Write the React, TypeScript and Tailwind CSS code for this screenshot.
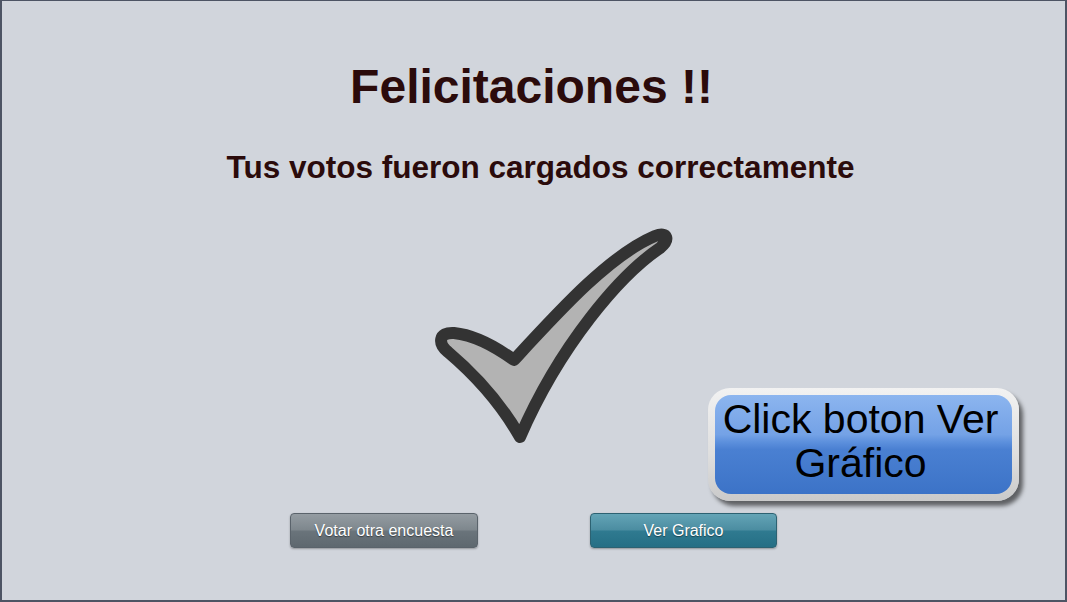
import React from "react";

export default function App() {
  return (
    <div
      className="relative w-[1067px] h-[602px] bg-[#d1d5dc] border-t border-l-2 border-r-2 border-b-2 border-[#4d5464] overflow-hidden"
      style={{ fontFamily: '"Liberation Sans", Arial, sans-serif' }}
    >
      <div className="flex flex-col items-center pt-[62px]">
        <h1 className="pr-[4px] text-[48px] leading-[48px] font-bold text-[#2b0b0b]">
          Felicitaciones !!
        </h1>
        <p className="pl-[14px] mt-[40px] text-[31.5px] leading-[32px] font-bold text-[#2b0b0b]">
          Tus votos fueron cargados correctamente
        </p>
      </div>

      <div className="pl-[426px] mt-[39px]">
        <svg width="250" height="232" viewBox="0 0 250 232">
          <path
            d="M 20 130 C 10 122, 10 110, 26 111 C 46 113, 68 125, 86 138 C 132 88, 182 33, 227 14 C 240 9, 242 18, 232 26 C 192 53, 132 123, 92 215 C 72 180, 46 152, 20 130 Z"
            fill="#b3b3b3"
            stroke="#333333"
            strokeWidth="12"
            strokeLinejoin="round"
          />
        </svg>
      </div>

      <div className="flex pl-[288px] gap-[112px] mt-[59px]">
        <button
          className="w-[188px] h-[35px] rounded-[4px] border border-[#5a636b] text-white text-[16px] leading-none shadow-[0_1px_2px_rgba(0,0,0,0.3)]"
          style={{
            background:
              "linear-gradient(to bottom, #949ca2 0%, #7e878d 48%, #6a747b 52%, #5e686f 100%)",
            textShadow: "0 1px 1px rgba(0,0,0,0.45)",
          }}
        >
          Votar otra encuesta
        </button>
        <button
          className="w-[187px] h-[35px] rounded-[4px] border border-[#2d6272] text-white text-[16px] leading-none shadow-[0_1px_2px_rgba(0,0,0,0.3)]"
          style={{
            background:
              "linear-gradient(to bottom, #64a4b6 0%, #4b8da1 48%, #2f7a90 52%, #266f85 100%)",
            textShadow: "0 1px 1px rgba(0,0,0,0.45)",
          }}
        >
          Ver Grafico
        </button>
      </div>

      <div
        className="absolute left-[706px] top-[387px] w-[311px] h-[113px] rounded-[22px] p-[7px] shadow-[4px_5px_4px_rgba(0,0,0,0.55)]"
        style={{ background: "linear-gradient(to bottom, #f2f2f2 0%, #dedede 60%, #cacaca 100%)" }}
      >
        <div
          className="w-full h-full rounded-[16px] flex flex-col items-center justify-center text-black text-[41px] leading-[44px] pb-[7px] pr-[6px]"
          style={{
            background:
              "linear-gradient(to bottom, #8cb5ef 0%, #74a2e6 40%, #5b8fdc 48%, #4a80d2 55%, #3c73c7 100%)",
          }}
        >
          <span>Click boton Ver</span>
          <span>Gráfico</span>
        </div>
      </div>
    </div>
  );
}
